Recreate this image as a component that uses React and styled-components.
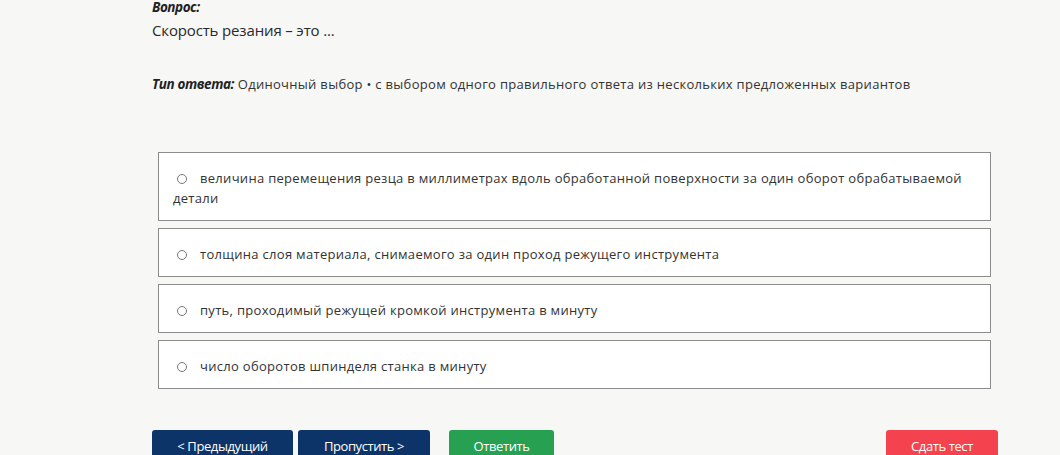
import React from "react";
import styled, { createGlobalStyle } from "styled-components";

const Global = createGlobalStyle`
  html, body { margin: 0; padding: 0; background: #f7f7f6; }
  body { font-family: "Open Sans", "Noto Sans", sans-serif; color: #2b2b2b; }
`;

const Page = styled.div`
  width: 1060px;
  height: 455px;
  overflow: hidden;
  padding-left: 152px;
  box-sizing: border-box;
  background: #f7f7f6;
`;

const Content = styled.div`
  width: 846px;
  display: flex;
  flex-direction: column;
`;

const Label = styled.div`
  font-size: 13.5px;
  font-weight: 700;
  font-style: italic;
  line-height: 16px;
  margin-top: -1px;
  letter-spacing: -0.45px;
  color: #222;
`;

const Question = styled.div`
  font-size: 15px;
  line-height: 20px;
  margin-top: 5px;
  letter-spacing: -0.15px;
  color: #2a2a2a;
`;

const TypeLine = styled.div`
  font-size: 13px;
  line-height: 18px;
  margin-top: 35px;
  letter-spacing: 0.3px;
  color: #333;
`;

const TypeLabel = styled.span`
  font-size: 13.5px;
  font-weight: 700;
  font-style: italic;
  letter-spacing: -0.4px;
  color: #222;
`;

const Options = styled.div`
  display: flex;
  flex-direction: column;
  gap: 7px;
  margin-top: 59px;
  margin-left: 6px;
  width: 833px;
`;

const Option = styled.div`
  background: #fff;
  border: 1px solid #8c8c8c;
  padding: 15px 14px 12px;
  font-size: 13px;
  line-height: 20px;
  color: #333;
  letter-spacing: 0.3px;
`;

const Radio = styled.span`
  display: inline-block;
  width: 10px;
  height: 10px;
  border: 1px solid #777;
  border-radius: 50%;
  margin: 0 13px 0 4px;
  vertical-align: -1px;
  box-sizing: border-box;
`;

const Buttons = styled.div`
  display: flex;
  margin-top: 41px;
  width: 846px;
`;

const Button = styled.button`
  width: ${(p) => p.$w}px;
  height: 32px;
  margin-left: ${(p) => p.$ml || 0}px;
  border: none;
  border-radius: 3px;
  background: ${(p) => p.$bg};
  color: #fff;
  font-family: "Open Sans", "Noto Sans", sans-serif;
  font-size: 13px;
  letter-spacing: -0.4px;
  padding: 0;
  cursor: pointer;
`;

const Spacer = styled.div`
  flex: 1;
`;

const options = [
  "величина перемещения резца в миллиметрах вдоль обработанной поверхности за один оборот обрабатываемой детали",
  "толщина слоя материала, снимаемого за один проход режущего инструмента",
  "путь, проходимый режущей кромкой инструмента в минуту",
  "число оборотов шпинделя станка в минуту",
];

export default function App() {
  return (
    <>
      <Global />
      <Page>
        <Content>
          <Label>Вопрос:</Label>
          <Question>Скорость резания – это ...</Question>
          <TypeLine>
            <TypeLabel>Тип ответа:</TypeLabel> Одиночный выбор • с выбором одного правильного ответа из нескольких предложенных вариантов
          </TypeLine>
          <Options>
            {options.map((o) => (
              <Option key={o}>
                <Radio />
                {o}
              </Option>
            ))}
          </Options>
          <Buttons>
            <Button $w={141} $bg="#0d3468">&lt; Предыдущий</Button>
            <Button $w={132} $ml={5} $bg="#0d3468">Пропустить &gt;</Button>
            <Button $w={105} $ml={19} $bg="#28a052">Ответить</Button>
            <Spacer />
            <Button $w={112} $bg="#f4434f">Сдать тест</Button>
          </Buttons>
        </Content>
      </Page>
    </>
  );
}
